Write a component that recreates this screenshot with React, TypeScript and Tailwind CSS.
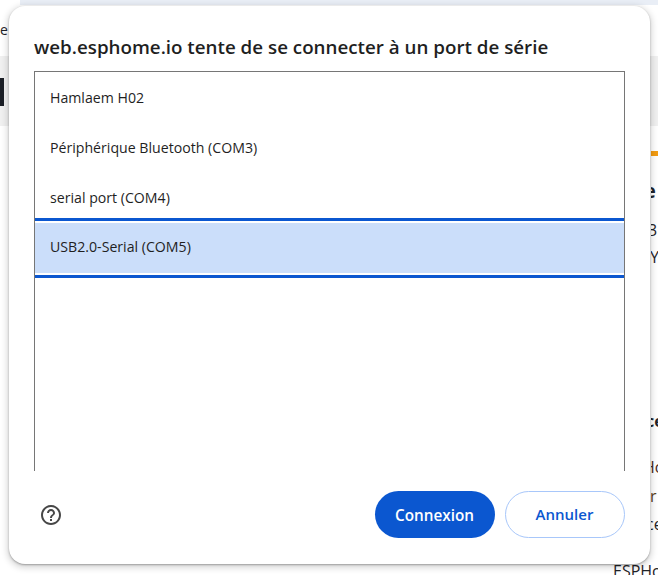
import React from "react";

const font = { fontFamily: '"Open Sans", "Noto Sans", sans-serif' };

function Row({ label, selected }: { label: string; selected?: boolean }) {
  return (
    <div
      className={
        "h-[50px] flex items-center pl-[15px] text-[14.15px] text-[#1f1f1f] " +
        (selected
          ? "mt-[1px] pb-[2px] bg-[#cbdefa] outline-[3px] outline-solid outline-[#0b57d0] outline-offset-2 relative"
          : "pt-[2px]")
      }
    >
      {label}
    </div>
  );
}

function Clip({ className, inner, text }: { className: string; inner?: string; text: string }) {
  return (
    <div className={"w-[7px] overflow-hidden whitespace-nowrap text-[#1f2328] " + className}>
      <div className={inner}>{text}</div>
    </div>
  );
}

export default function App() {
  return (
    <div className="relative h-[575px] w-[658px] overflow-hidden bg-white" style={font}>
      {/* page behind the dialog */}
      <div className="ml-[20px] h-[5px] bg-[#e9eef6]" />
      <div className="h-[51px] pt-[15px] text-[14px] leading-5 text-[#1f2328]">
        <div className="w-[8px] overflow-hidden">e</div>
      </div>
      <div className="h-[70px] bg-[#f0f0f0] pt-[22px]">
        <div className="h-[28px] w-[4px] bg-[#1b1f26]" />
      </div>
      <div className="flex flex-col items-end">
        <div className="mt-[25px] h-[5px] w-[7px] bg-[#f39c12]" />
        <Clip className="mt-[21px] text-[20px] font-bold leading-7" inner="-ml-[7px]" text="e" />
        <Clip className="mt-[13px] text-[16px] leading-6" inner="-ml-[3px]" text="3" />
        <Clip className="mt-[3px] text-[16px] leading-6" inner="-ml-[1px]" text="Y" />
        <Clip className="mt-[140px] text-[16px] font-bold leading-6" inner="-ml-[5px]" text="ce" />
        <Clip className="mt-[22px] text-[16px] leading-6 text-[#4a2a22]" inner="-ml-[8px]" text="Ho" />
        <Clip className="mt-[5px] text-[16px] leading-6 text-[#5a4020]" inner="-ml-[1px]" text="r" />
        <Clip className="mt-[4px] text-[16px] leading-6" inner="-ml-[5px]" text="ce" />
      </div>
      <div className="absolute left-[613px] top-[561px] text-[16px] leading-5 text-[#1f2328] whitespace-nowrap">ESPHome</div>

      {/* dialog */}
      <div className="absolute left-[9px] top-[6px] flex h-[558px] w-[641px] flex-col rounded-[16px] bg-white shadow-[0_2px_6px_2px_rgba(0,0,0,0.15),0_1px_2px_rgba(0,0,0,0.3)]">
        <h1 className="ml-[25px] mt-[27px] h-[38px] text-[18.77px] font-semibold leading-[28px] text-[#1f1f1f] whitespace-nowrap">
          web.esphome.io tente de se connecter à un port de série
        </h1>
        <div className="mx-[25px] h-[400px] overflow-hidden border border-b-0 border-[#767676]">
          <Row label="Hamlaem H02" />
          <Row label="Périphérique Bluetooth (COM3)" />
          <Row label="serial port (COM4)" />
          <Row label="USB2.0-Serial (COM5)" selected />
        </div>
        <div className="mx-[25px] mt-[20px] flex items-center justify-between">
          <svg width="24" height="24" viewBox="0 0 24 24" className="ml-[5px] text-[#474747]" fill="currentColor">
            <path d="M11 18h2v-2h-2v2zm1-16C6.48 2 2 6.48 2 12s4.48 10 10 10 10-4.48 10-10S17.52 2 12 2zm0 18c-4.41 0-8-3.59-8-8s3.59-8 8-8 8 3.59 8 8-3.59 8-8 8zm0-14c-2.21 0-4 1.79-4 4h2c0-1.1.9-2 2-2s2 .9 2 2c0 2-3 1.75-3 5h2c0-2.25 3-2.5 3-5 0-2.21-1.79-4-4-4z" />
          </svg>
          <div className="flex gap-[10px]">
            <button className="h-[47px] w-[120px] rounded-full bg-[#0b57d0] pt-[2px] pr-[1px] text-[15.3px] font-semibold text-white">Connexion</button>
            <button className="h-[47px] w-[120px] rounded-full border border-[#a8c7fa] bg-white pr-[1px] text-[15px] font-semibold text-[#0b57d0]">Annuler</button>
          </div>
        </div>
      </div>
    </div>
  );
}
